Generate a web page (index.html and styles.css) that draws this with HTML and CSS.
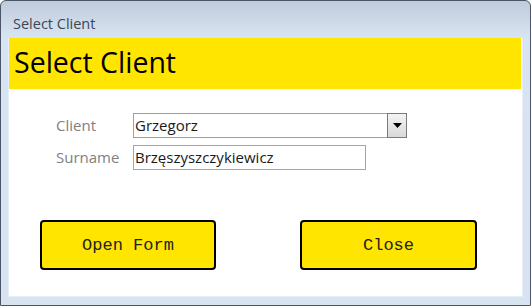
FILE: index.html
```
<!DOCTYPE html>
<html lang="en">
<head>
    <meta charset="UTF-8">
    <title>Select Client</title>
    <link rel="stylesheet" href="styles.css">
</head>
<body>
    <div class="window">
        <div class="titlebar">Select Client</div>
        <div class="client">
            <div class="header">Select Client</div>
            <div class="fields">
                <label class="label" for="client">Client</label>
                <div class="combo" id="client">
                    <span class="combo-text">Grzegorz</span>
                    <span class="combo-btn">
                        <svg width="9" height="5" viewBox="0 0 9 5"><path d="M0 0h9L4.5 5z" fill="#000"/></svg>
                    </span>
                </div>
                <label class="label" for="surname">Surname</label>
                <div class="textbox" id="surname">Brzęszyszczykiewicz</div>
            </div>
            <div class="buttons">
                <button class="btn btn-open">Open Form</button>
                <button class="btn btn-close">Close</button>
            </div>
        </div>
    </div>
</body>
</html>
```

FILE: styles.css
```
body {
    margin: 0;
    font-family: "Open Sans", sans-serif;
}

.window {
    width: 531px;
    height: 306px;
    box-sizing: border-box;
    border: 1px solid #4a5568;
    border-radius: 6px 6px 0 0;
    background: linear-gradient(#bfcbdb 0px, #d9e4f2 36px, #d7e3f1 100%);
    display: flex;
    flex-direction: column;
}

.titlebar {
    height: 37px;
    box-sizing: border-box;
    padding: 13px 0 0 12px;
    font-size: 14.5px;
    color: #3c4654;
}

.client {
    margin: 0 7px 8px 7px;
    flex: 1;
    background: #fff;
    border: 1px solid #e6eef8;
    border-top: none;
}

.header {
    height: 51px;
    background: #ffe500;
    margin-right: 1px;
    box-sizing: border-box;
    padding: 5px 0 0 5px;
    font-size: 28.5px;
    color: #000;
}

.fields {
    display: grid;
    grid-template-columns: 77px auto;
    row-gap: 7px;
    padding: 24px 0 0 47px;
    align-items: center;
}

.label {
    font-size: 15px;
    color: #7f7f7f;
    margin-top: -2px;
}

.combo {
    width: 274px;
    height: 25px;
    display: flex;
    box-sizing: border-box;
    border: 1px solid #a0a0a0;
    border-right: none;
}

.combo-text, .textbox {
    font-size: 15px;
    color: #1a1a1a;
    padding-left: 1px;
    line-height: 22px;
}

.combo-text {
    flex: 1;
}

.combo-btn {
    width: 18px;
    height: 23px;
    border: 1px solid #7a7a7a;
    margin-top: -1px;
    background: linear-gradient(#f4f4f4, #d9d9d9);
    display: flex;
    align-items: center;
    justify-content: center;
}

.textbox {
    width: 233px;
    height: 25px;
    box-sizing: border-box;
    border: 1px solid #a5a5a5;
}

.buttons {
    display: flex;
    gap: 84px;
    padding: 50px 0 0 31px;
}

.btn {
    width: 176px;
    height: 50px;
    background: #ffe500;
    border: 2px solid #000;
    border-radius: 4px;
    font-family: "Liberation Mono", monospace;
    font-size: 17px;
    color: #222;
    padding: 0;
}

.btn-close {
    width: 177px;
}
```
